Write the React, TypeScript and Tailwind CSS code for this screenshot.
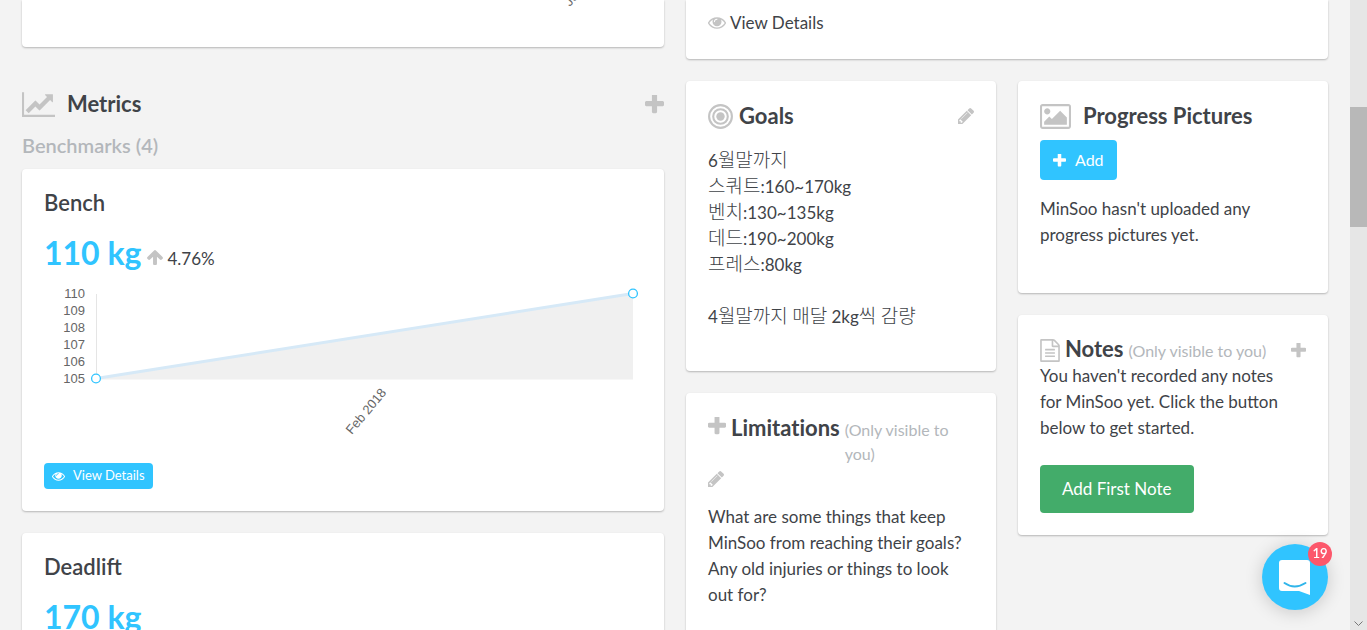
import React from 'react';

const ICONS = {
  plus: {
    viewBox: '192 192 1408 1408',
    d: 'M1600 736v192q0 40-28 68t-68 28h-416v416q0 40-28 68t-68 28h-192q-40 0-68-28t-28-68v-416h-416q-40 0-68-28t-28-68v-192q0-40 28-68t68-28h416v-416q0-40 28-68t68-28h192q40 0 68 28t28 68v416h416q40 0 68 28t28 68z',
  },
  eye: {
    viewBox: '0 384 1792 1152',
    d: 'M1664 960q-152-236-381-353 61 104 61 225 0 185-131.5 316.5t-316.5 131.5-316.5-131.5-131.5-316.5q0-121 61-225-229 117-381 353 133 205 333.5 326.5t434.5 121.5 434.5-121.5 333.5-326.5zm-720-384q0-20-14-34t-34-14q-125 0-214.5 89.5t-89.5 214.5q0 20 14 34t34 14 34-14 14-34q0-86 61-147t147-61q20 0 34-14t14-34zm848 384q0 34-20 69-140 230-376.5 368.5t-499.5 138.5-499.5-139-376.5-368q-20-35-20-69t20-69q140-229 376.5-368t499.5-139 499.5 139 376.5 368q20 35 20 69z',
  },
  pencil: {
    viewBox: '128 149 1515 1515',
    d: 'M491 1536l91-91-235-235-91 91v107h128v128h107zm523-928q0-22-22-22-10 0-17 7l-542 542q-7 7-7 17 0 22 22 22 10 0 17-7l542-542q7-7 7-17zm-54-192l416 416-832 832h-416v-416zm683 96q0 53-37 90l-166 166-416-416 166-165q36-38 90-38 53 0 91 38l235 234q37 39 37 91z',
  },
  chart: {
    viewBox: '0 128 2048 1536',
    d: 'M2048 1536v128h-2048v-1536h128v1408h1920zm-128-1248v435q0 21-19.5 29.5t-35.5-7.5l-121-121-633 633q-10 10-23 10t-23-10l-233-233-416 416-192-192 585-585q10-10 23-10t23 10l233 233 464-464-121-121q-16-16-7.5-35.5t29.5-19.5h435q14 0 23 9t9 23z',
  },
  picture: {
    viewBox: '0 128 1920 1536',
    d: 'M640 576q0 80-56 136t-136 56-136-56-56-136 56-136 136-56 136 56 56 136zm1024 384v448h-1408v-192l320-320 160 160 512-512zm96-704h-1600q-13 0-22.5 9.5t-9.5 22.5v1216q0 13 9.5 22.5t22.5 9.5h1600q13 0 22.5-9.5t9.5-22.5v-1216q0-13-9.5-22.5t-22.5-9.5zm160 32v1216q0 66-47 113t-113 47h-1600q-66 0-113-47t-47-113v-1216q0-66 47-113t113-47h1600q66 0 113 47t47 113z',
  },
  file: {
    viewBox: '128 0 1536 1792',
    d: 'M1596 380q28 28 48 76t20 88v1152q0 40-28 68t-68 28h-1344q-40 0-68-28t-28-68v-1600q0-40 28-68t68-28h896q40 0 88 20t76 48zm-444-244v376h376q-10-29-22-41l-313-313q-12-12-41-22zm384 1528v-1024h-416q-40 0-68-28t-28-68v-416h-768v1536h1280zm-1024-864q0-14 9-23t23-9h704q14 0 23 9t9 23v64q0 14-9 23t-23 9h-704q-14 0-23-9t-9-23v-64zm736 224q14 0 23 9t9 23v64q0 14-9 23t-23 9h-704q-14 0-23-9t-9-23v-64q0-14 9-23t23-9h704zm0 256q14 0 23 9t9 23v64q0 14-9 23t-23 9h-704q-14 0-23-9t-9-23v-64q0-14 9-23t23-9h704z',
  },
  arrowUp: {
    viewBox: '117 192 1558 1472',
    d: 'M1675 971q0 51-37 90l-75 75q-38 38-91 38-54 0-90-38l-294-293v704q0 52-37.5 84.5t-90.5 32.5h-128q-53 0-90.5-32.5t-37.5-84.5v-704l-294 293q-36 38-90 38t-90-38l-75-75q-38-38-38-90 0-53 38-91l651-651q35-37 90-37 54 0 91 37l651 651q37 39 37 91z',
  },
};

interface IconProps {
  name: keyof typeof ICONS;
  className?: string;
}

const Icon: React.FC<IconProps> = ({ name, className = '' }) => (
  <svg viewBox={ICONS[name].viewBox} className={`shrink-0 fill-current ${className}`} aria-hidden="true">
    <path d={ICONS[name].d} />
  </svg>
);

const BullseyeIcon: React.FC = () => (
  <svg viewBox="0 0 25 25" className="size-[25px] shrink-0 text-[#c4c4c4]" fill="none" stroke="currentColor" strokeWidth="2.1" aria-hidden="true">
    <circle cx="12.5" cy="12.5" r="11.4" />
    <circle cx="12.5" cy="12.5" r="7.3" />
    <circle cx="12.5" cy="12.5" r="4.2" fill="currentColor" stroke="none" />
  </svg>
);

const Card: React.FC<{ className?: string; children?: React.ReactNode }> = ({ className = '', children }) => (
  <section className={`rounded bg-white px-[22px] shadow-[0_1px_2px_rgba(0,0,0,0.25)] ${className}`}>{children}</section>
);

const BenchChart: React.FC = () => {
  const ticks = [110, 109, 108, 107, 106, 105];
  return (
    <svg viewBox="0 0 598 160" className="block w-full" role="img" aria-label="Bench progress">
      <g fill="#666" fontFamily="Liberation Sans, Arial, sans-serif" fontSize="13">
        {ticks.map((tick, i) => (
          <text key={tick} x="41" y={13 + i * 17} textAnchor="end">{tick}</text>
        ))}
        <text textAnchor="end" transform="translate(343 108) rotate(-50)">Feb 2018</text>
      </g>
      <path d="M52.5 9v85" stroke="#e5e5e5" />
      <path d="M52 93.500L589 8.500v86H52z" fill="#f0f0f0" />
      <path d="M52 93.500L589 8.500" stroke="#d6e9f7" strokeWidth="3" />
      <g fill="#fff" stroke="#30c4ff" strokeWidth="1.3">
        <circle cx="52" cy="93.5" r="4.4" />
        <circle cx="589" cy="8.5" r="4.4" />
      </g>
    </svg>
  );
};

const VisibleHint: React.FC = () => (
  <small className="text-[16px] leading-6 font-normal text-[#b3b7bb]">(Only visible to you)</small>
);

const goals = ['6월말까지', '스쿼트:160~170kg', '벤치:130~135kg', '데드:190~200kg', '프레스:80kg', '', '4월말까지 매달 2kg씩 감량'];

// Hangul reads small next to the Latin face, so it gets its own size
const renderGoal = (line: string) =>
  line.split(/([가-힣]+)/).map((part, i) =>
    /[가-힣]/.test(part) ? <span key={i} className="text-[19px] font-light">{part}</span> : part
  );

const LeftColumn: React.FC = () => (
  <div className="flex flex-col">
    <Card className="h-[47px] rounded-t-none">
      {/* tail of the previous chart's month label */}
      <svg viewBox="0 0 598 47" className="block w-full">
        <text x="0" y="0" transform="translate(526 7) rotate(-50)" fill="#666" fontFamily="Liberation Sans, Arial, sans-serif" fontSize="13">Jun 2018</text>
      </svg>
    </Card>

    <header className="mt-11 flex h-[26px] items-center">
      <Icon name="chart" className="h-[25px] w-[33px] text-[#c4c4c4]" />
      <h2 className="ml-3 text-[22px] leading-6 font-bold">Metrics</h2>
      <button type="button" className="ml-auto text-[#c4c4c4]" aria-label="Add metric">
        <Icon name="plus" className="size-[19px]" />
      </button>
    </header>
    <h3 className="mt-4 text-[20px] leading-6 font-semibold text-[#b3b7bb]">Benchmarks (4)</h3>

    <Card className="mt-3 pt-5 pb-[22px]">
      <h3 className="text-[22px] leading-7 font-semibold">Bench</h3>
      <p className="mt-3 flex h-12 items-baseline">
        <strong className="text-[32px] leading-12 font-bold text-[#30c4ff]">110 kg</strong>
        <Icon name="arrowUp" className="ml-1.5 h-[15px] w-4 text-[#c4c4c4]" />
        <span className="ml-1 text-[17px]">4.76%</span>
      </p>
      <div className="mt-2">
        <BenchChart />
      </div>
      <button type="button" className="mt-[18px] flex h-[26px] items-center rounded bg-[#30c4ff] px-2 text-[13px] text-white">
        <Icon name="eye" className="mr-2 h-[9px] w-[13px]" />
        View Details
      </button>
    </Card>

    <Card className="mt-[22px] pt-5 pb-[22px]">
      <h3 className="text-[22px] leading-7 font-semibold">Deadlift</h3>
      <p className="mt-3 flex h-12 items-baseline">
        <strong className="text-[32px] leading-12 font-bold text-[#30c4ff]">170 kg</strong>
      </p>
    </Card>
  </div>
);

const RightColumn: React.FC = () => (
  <div>
    <Card className="h-[59px] rounded-t-none pt-2.5">
      <a href="#details" className="flex items-center gap-1 text-[17px] leading-[26px]">
        <Icon name="eye" className="h-3 w-[18px] text-[#c4c4c4]" />
        View Details
      </a>
    </Card>

    <div className="mt-[22px] grid grid-cols-2 items-start gap-[22px]">
      <div className="flex flex-col gap-[22px]">
        <Card className="pt-[23px] pb-[42px]">
          <header className="flex h-6 items-center">
            <BullseyeIcon />
            <h2 className="ml-1.5 text-[22px] leading-6 font-bold">Goals</h2>
            <button type="button" className="ml-auto text-[#c4c4c4]" aria-label="Edit goals">
              <Icon name="pencil" className="size-4" />
            </button>
          </header>
          <div className="mt-[19px] text-[17px] leading-[26px]">
            {goals.map((line, i) => (
              <p key={i} className="h-[26px]">{renderGoal(line)}</p>
            ))}
          </div>
        </Card>

        <Card className="pt-[23px] pb-10">
          <header>
            <div className="flex items-baseline">
              <Icon name="plus" className="mt-px size-[18px] self-start text-[#c4c4c4]" />
              <h2 className="mx-[5px] text-[22px] leading-6 font-bold [font-variant-ligatures:none]">Limitations</h2>
              <VisibleHint />
            </div>
            <button type="button" className="mt-[5px] block text-[#c4c4c4]" aria-label="Edit limitations">
              <Icon name="pencil" className="size-4" />
            </button>
          </header>
          <p className="mt-[17px] text-[17px] leading-[26px]">
            What are some things that keep MinSoo from reaching their goals? Any old injuries or things to look out for?
          </p>
        </Card>
      </div>

      <div className="flex flex-col gap-[22px]">
        <Card className="pt-[23px] pb-[45px]">
          <header className="flex h-6 items-center">
            <Icon name="picture" className="h-[25px] w-[31px] text-[#c4c4c4]" />
            <h2 className="ml-3 text-[22px] leading-6 font-bold">Progress Pictures</h2>
          </header>
          <button type="button" className="mt-3 flex h-10 items-center rounded bg-[#30c4ff] px-[13px] text-[16px] text-white">
            <Icon name="plus" className="mr-[9px] size-[13px]" />
            Add
          </button>
          <p className="mt-4 text-[17px] leading-[26px]">MinSoo hasn't uploaded any progress pictures yet.</p>
        </Card>

        <Card className="pt-[23px] pb-[22px]">
          <header className="flex h-6 items-center">
            <Icon name="file" className="h-[23px] w-5 text-[#c4c4c4]" />
            <div className="ml-[5px] flex items-baseline gap-[5px]">
              <h2 className="text-[22px] leading-6 font-bold">Notes</h2>
              <VisibleHint />
            </div>
            <button type="button" className="ml-auto text-[#c4c4c4]" aria-label="Add note">
              <Icon name="plus" className="size-[15px]" />
            </button>
          </header>
          <p className="mt-px pr-3 text-[17px] leading-[26px]">
            You haven't recorded any notes for MinSoo yet. Click the button below to get started.
          </p>
          <button type="button" className="mt-6 h-12 rounded bg-[#43ac6a] px-[22px] text-[17px] text-white">Add First Note</button>
        </Card>
      </div>
    </div>
  </div>
);

const Messenger: React.FC = () => (
  <button type="button" className="fixed right-[39px] bottom-5 size-[66px] rounded-full bg-[#30c4ff] shadow-[0_2px_18px_rgba(0,0,0,0.18)]" aria-label="Open messenger">
    <svg viewBox="0 0 66 66" className="size-full" fill="none" aria-hidden="true">
      <path d="M20 16h25q3 0 3 3v32l-11-4H20q-3 0-3-3V19q0-3 3-3z" fill="#fff" />
      <path d="M22.500 39q10 7 21 0" stroke="#30b5ea" strokeWidth="2" strokeLinecap="round" />
    </svg>
    <span className="absolute -top-0.5 -right-1 flex size-6 items-center justify-center rounded-full bg-[#fc576b] text-[13px] font-semibold text-white">19</span>
  </button>
);

const Scrollbar: React.FC = () => (
  <div className="flex w-[17px] shrink-0 flex-col bg-[#e6e6e6] pt-[107px]" aria-hidden="true">
    <div className="h-30 bg-[#b8b8b8]" />
    <svg viewBox="0 0 17 12" className="mt-auto w-full" fill="none" stroke="#777">
      <path d="M4.500 3.500l4 4 4-4" />
    </svg>
  </div>
);

const App: React.FC = () => (
  <div className="flex h-screen overflow-hidden bg-[#f3f3f3] font-['Lato','Noto_Sans_CJK_KR',sans-serif] text-[#404348]">
    <main className="grid flex-1 grid-cols-2 items-start gap-[22px] px-[22px]">
      <LeftColumn />
      <RightColumn />
    </main>
    <Scrollbar />
    <Messenger />
  </div>
);

export default App;
